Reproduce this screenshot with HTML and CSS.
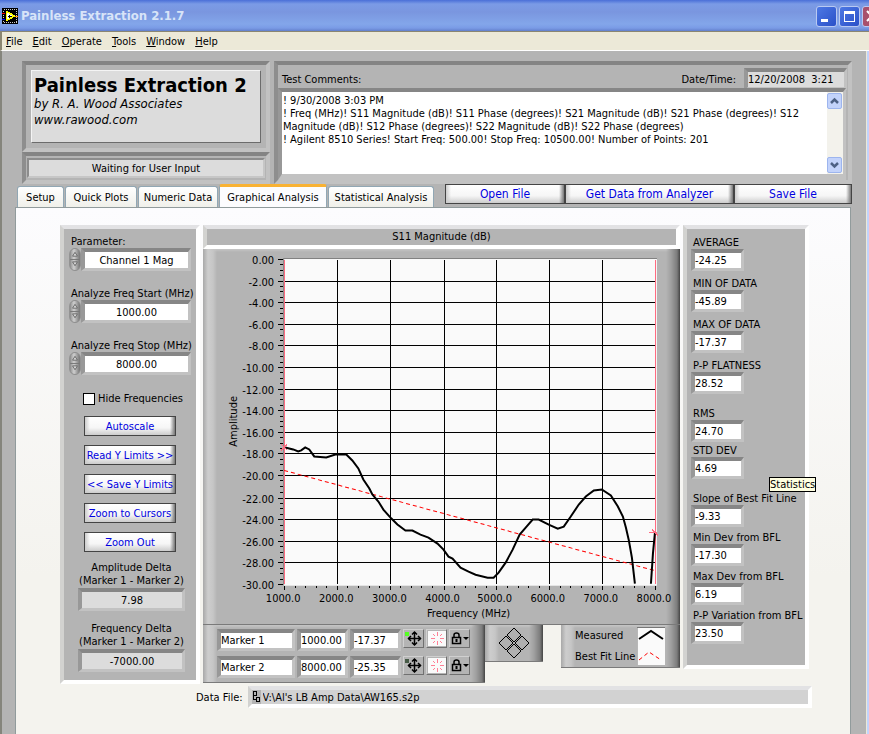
FILE: index.html
```
<!DOCTYPE html>
<html lang="en">
<head>
    <meta charset="utf-8">
    <title>Painless Extraction 2.1.7</title>
    <link rel="stylesheet" href="styles.css">
</head>
<body>
    <header class="titlebar">
        <svg class="app-icon" width="16" height="16" viewBox="0 0 16 16" shape-rendering="crispEdges">
            <rect width="16" height="16" fill="#000"/>
            <rect x="1.5" y="1.5" width="13" height="13" fill="none" stroke="#ccc" stroke-dasharray="1 1"/>
            <path d="M4.500 3.500V12.500L12.500 8Z" fill="#fff" stroke="#ff0" stroke-width="1.500"/>
            <path d="M6 8.500h4M7.500 7v3" stroke="#000"/>
            <path d="M0 5.500h3" stroke="#f00"/>
            <path d="M0 11.500h3" stroke="#00f"/>
            <path d="M13 8.500h3" stroke="#f80"/>
        </svg>
        <span class="title">Painless Extraction 2.1.7</span>
        <div class="win-buttons">
            <button class="win-btn" aria-label="Minimize"><svg width="19" height="19"><rect x="4" y="12" width="7" height="3" fill="#fff"/></svg></button>
            <button class="win-btn" aria-label="Maximize"><svg width="19" height="19" shape-rendering="crispEdges"><path d="M4.500 5v9.500h10V5" fill="none" stroke="#fff"/><rect x="4" y="4" width="11" height="3" fill="#fff"/></svg></button>
            <button class="win-btn close" aria-label="Close"><svg width="19" height="19"><path d="M4 4l10 10M14 4L4 14" stroke="#fff" stroke-width="2"/></svg></button>
        </div>
    </header>

    <nav class="menubar">
        <a href="#"><u>F</u>ile</a>
        <a href="#"><u>E</u>dit</a>
        <a href="#"><u>O</u>perate</a>
        <a href="#"><u>T</u>ools</a>
        <a href="#"><u>W</u>indow</a>
        <a href="#"><u>H</u>elp</a>
    </nav>

    <div class="window">
        <div class="client">
            <section class="top">
                <div class="brand-col">
                    <div class="groove brand">
                        <div class="brand-plate">
                            <h1>Painless Extraction 2</h1>
                            <p>by R. A. Wood Associates</p>
                            <p>www.rawood.com</p>
                        </div>
                    </div>
                    <div class="groove status"><div class="status-text">Waiting for User Input</div></div>
                </div>
                <div class="groove comments">
                    <div class="comments-head">
                        <label for="comments">Test Comments:</label>
                        <label class="date-label" for="datetime">Date/Time:</label>
                        <input class="sunken date" id="datetime" value="12/20/2008  3:21" readonly>
                    </div>
                    <div class="sunken comments-box">
                        <textarea id="comments">! 9/30/2008 3:03 PM
! Freq (MHz)! S11 Magnitude (dB)! S11 Phase (degrees)! S21 Magnitude (dB)! S21 Phase (degrees)! S12
Magnitude (dB)! S12 Phase (degrees)! S22 Magnitude (dB)! S22 Phase (degrees)
! Agilent 8510 Series! Start Freq: 500.00! Stop Freq: 10500.00! Number of Points: 201</textarea>
                        <div class="scroll">
                            <button aria-label="Scroll up"><svg width="13" height="14"><path d="M3 9l3.500-3.500L10 9" fill="none" stroke="#4d6185" stroke-width="2.500"/></svg></button>
                            <button aria-label="Scroll down"><svg width="13" height="14"><path d="M3 5l3.500 3.500L10 5" fill="none" stroke="#4d6185" stroke-width="2.500"/></svg></button>
                        </div>
                    </div>
                </div>
            </section>

            <div class="tab-row">
                <div class="tabs" role="tablist">
                    <button class="tab w-setup" role="tab">Setup</button>
                    <button class="tab w-quick" role="tab">Quick Plots</button>
                    <button class="tab w-numeric" role="tab">Numeric Data</button>
                    <button class="tab w-graph active" role="tab" aria-selected="true">Graphical Analysis</button>
                    <button class="tab w-stat" role="tab">Statistical Analysis</button>
                </div>
                <div class="file-buttons">
                    <button class="btn open">Open File</button>
                    <button class="btn get">Get Data from Analyzer</button>
                    <button class="btn save">Save File</button>
                </div>
            </div>

            <main class="page">
                <div class="columns">
                    <section class="panel controls">
                        <div class="control">
                            <label for="param">Parameter:</label>
                            <div class="spin">
                                <svg class="knob" width="12" height="23" viewBox="0 0 12 24"><use href="#knob-shape"/></svg>
                                <input class="sunken" id="param" value="Channel 1 Mag">
                            </div>
                        </div>
                        <div class="control">
                            <label for="fstart">Analyze Freq Start (MHz)</label>
                            <div class="spin">
                                <svg class="knob" width="12" height="23" viewBox="0 0 12 24"><use href="#knob-shape"/></svg>
                                <input class="sunken" id="fstart" value="1000.00">
                            </div>
                        </div>
                        <div class="control">
                            <label for="fstop">Analyze Freq Stop (MHz)</label>
                            <div class="spin">
                                <svg class="knob" width="12" height="23" viewBox="0 0 12 24"><use href="#knob-shape"/></svg>
                                <input class="sunken" id="fstop" value="8000.00">
                            </div>
                        </div>
                        <div class="check">
                            <input type="checkbox" id="hide">
                            <label for="hide">Hide Frequencies</label>
                        </div>
                        <div class="stack">
                            <button class="btn">Autoscale</button>
                            <button class="btn">Read Y Limits &gt;&gt;</button>
                            <button class="btn">&lt;&lt; Save Y Limits</button>
                            <button class="btn">Zoom to Cursors</button>
                            <button class="btn">Zoom Out</button>
                        </div>
                        <div class="readout">
                            <label for="adelta">Amplitude Delta<br>(Marker 1 - Marker 2)</label>
                            <input class="sunken" id="adelta" value="7.98" readonly>
                        </div>
                        <div class="readout">
                            <label for="fdelta">Frequency Delta<br>(Marker 1 - Marker 2)</label>
                            <input class="sunken" id="fdelta" value="-7000.00" readonly>
                        </div>
                    </section>

                    <section class="graph-col">
                        <h2 class="panel graph-title">S11 Magnitude (dB)</h2>
                        <div class="raised">
                            <svg id="graph" viewBox="0 0 476 374"></svg>
                        </div>
                        <div class="under">
                            <div class="raised markers">
                                <div class="marker">
                                    <input class="sunken m-name" aria-label="Marker 1 name" value="Marker 1">
                                    <input class="sunken m-val" aria-label="Marker 1 frequency" value="1000.00">
                                    <input class="sunken m-val" aria-label="Marker 1 amplitude" value="-17.37">
                                    <button class="tool" aria-label="Move marker 1"><svg width="20" height="17"><rect x="1" y="2" width="4" height="4" fill="#5f2"/><use href="#move-shape"/></svg></button>
                                    <button class="tool" aria-label="Marker 1 style"><svg width="20" height="17"><use href="#star-shape"/></svg></button>
                                    <button class="tool" aria-label="Lock marker 1"><svg width="20" height="17"><use href="#lock-shape"/></svg></button>
                                </div>
                                <div class="marker">
                                    <input class="sunken m-name" aria-label="Marker 2 name" value="Marker 2">
                                    <input class="sunken m-val" aria-label="Marker 2 frequency" value="8000.00">
                                    <input class="sunken m-val" aria-label="Marker 2 amplitude" value="-25.35">
                                    <button class="tool" aria-label="Move marker 2"><svg width="20" height="17"><rect x="1" y="2" width="4" height="4" fill="#465a46"/><use href="#move-shape"/></svg></button>
                                    <button class="tool" aria-label="Marker 2 style"><svg width="20" height="17"><use href="#star-shape"/></svg></button>
                                    <button class="tool" aria-label="Lock marker 2"><svg width="20" height="17"><use href="#lock-shape"/></svg></button>
                                </div>
                            </div>
                            <button class="raised mover" aria-label="Move cursor">
                                <svg width="32" height="32" viewBox="0 0 32 32" fill="#b0b0b0" stroke="#000">
                                    <path d="M16 1l7 7-7 7-7-7zM16 17l7 7-7 7-7-7zM8 9l7 7-7 7-7-7zM24 9l7 7-7 7-7-7z"/>
                                </svg>
                            </button>
                            <div class="raised legend">
                                <div class="legend-names"><span>Measured</span><span>Best Fit Line</span></div>
                                <svg width="28" height="38" viewBox="0 0 28 38">
                                    <rect width="28" height="38" fill="#fafafa"/>
                                    <path d="M0 38V.500h28" fill="none" stroke="#777"/>
                                    <path d="M2 12L14 4l12 8" fill="none" stroke="#000" stroke-width="2"/>
                                    <path d="M2 33l10-8 12 8" fill="none" stroke="#f00" stroke-dasharray="4 3"/>
                                </svg>
                            </div>
                        </div>
                    </section>

                    <section class="panel stats">
                        <div class="stat-group first">
                            <div class="stat"><label for="s1">AVERAGE</label><input class="sunken" id="s1" value="-24.25" readonly></div>
                            <div class="stat"><label for="s2">MIN OF DATA</label><input class="sunken" id="s2" value="-45.89" readonly></div>
                            <div class="stat"><label for="s3">MAX OF DATA</label><input class="sunken" id="s3" value="-17.37" readonly></div>
                            <div class="stat"><label for="s4">P-P FLATNESS</label><input class="sunken" id="s4" value="28.52" readonly></div>
                        </div>
                        <div class="stat-group tight">
                            <div class="stat"><label for="s5">RMS</label><input class="sunken" id="s5" value="24.70" readonly></div>
                            <div class="stat"><label for="s6">STD DEV</label><input class="sunken" id="s6" value="4.69" readonly></div>
                        </div>
                        <div class="stat-group">
                            <div class="stat"><label for="s7">Slope of Best Fit Line</label><input class="sunken" id="s7" value="-9.33" readonly></div>
                            <div class="stat"><label for="s8">Min Dev from BFL</label><input class="sunken" id="s8" value="-17.30" readonly></div>
                            <div class="stat"><label for="s9">Max Dev from BFL</label><input class="sunken" id="s9" value="6.19" readonly></div>
                            <div class="stat"><label for="s10">P-P Variation from BFL</label><input class="sunken" id="s10" value="23.50" readonly></div>
                        </div>
                        <div class="tooltip" role="tooltip">Statistics</div>
                    </section>
                </div>

                <div class="data-file">
                    <label for="path">Data File:</label>
                    <div class="panel path">
                        <svg width="9" height="14" viewBox="0 0 9 14" fill="none" stroke="#000" shape-rendering="crispEdges">
                            <rect width="9" height="14" fill="#b4b4b4" stroke="none"/>
                            <path d="M1.500 1.500h3v4h-3zM4.500 7.500h3v4h-3zM1.500 5v4.500h3"/>
                        </svg>
                        <input id="path" value="V:\Al's LB Amp Data\AW165.s2p">
                    </div>
                </div>
            </main>
        </div>
        <div class="edge"></div>
    </div>

    <!-- shared shapes -->
    <svg width="0" height="0" class="defs">
        <defs>
            <linearGradient id="knob-fill" x1="0" x2="1">
                <stop offset="0" stop-color="#8a8a8a"/>
                <stop offset=".4" stop-color="#cfcfcf"/>
                <stop offset="1" stop-color="#6e6e6e"/>
            </linearGradient>
            <g id="knob-shape">
                <rect x=".500" y=".500" width="11" height="23" rx="5.500" fill="url(#knob-fill)" stroke="#8c8c8c"/>
                <path d="M1 12h10" stroke="#777"/>
                <path d="M3.500 8.500L6 4.500l2.500 4zM3.500 14.500h5L6 18.500z" fill="#ddd" stroke="#666"/>
            </g>
            <g id="move-shape" fill="none" stroke="#000" stroke-width="1.500">
                <path d="M10.500 2v13M4.500 8.500h12"/>
                <path d="M8 4.500l2.500-2.500L13 4.500M8 12.500l2.500 2.500 2.500-2.500M7 6L4.500 8.500 7 11M14 6l2.500 2.500L14 11"/>
            </g>
            <g id="star-shape">
                <rect x="1" y="1" width="18" height="15" fill="#fafafa"/>
                <path d="M10.500 2v4M10.500 11v4M4 8.500h4M13 8.500h4M6 4l2 2M15 4l-2 2M6 13l2-2M15 13l-2-2" stroke="#ff8095"/>
            </g>
            <g id="lock-shape">
                <path d="M4 8V5q0-2 2.500-2T9 5v3" fill="none" stroke="#000" stroke-width="1.500"/>
                <rect x="2.500" y="7.500" width="8" height="6" fill="#b4b4b4" stroke="#000" stroke-width="1.500"/>
                <path d="M6.500 9v3" stroke="#000" stroke-width="2"/>
                <path d="M13 7h6l-3 3z"/>
            </g>
        </defs>
    </svg>
    <script src="graph.js"></script>
</body>
</html>
```
FILE: styles.css
```
* { box-sizing: border-box; }

body {
    margin: 0;
    min-height: 100vh;
    display: flex;
    flex-direction: column;
    background: #b4b4b4;
    color: #000;
    font-family: "DejaVu Sans Condensed", Tahoma, sans-serif;
    font-size: 11px;
    line-height: 13px;
    overflow-x: hidden;
}

h1, h2, p { margin: 0; }
button, input, textarea { font: inherit; color: inherit; }
button { padding: 0; }
svg { display: block; }
.defs { position: absolute; }

/* title bar and menu */
.titlebar {
    display: flex;
    align-items: center;
    height: 31px;
    padding-left: 2px;
    background: linear-gradient(#4a6fd8, #7b9be6 4px, #7a96df 12px, #83a6ea 24px, #7a9be6 28px, #6380cc);
    overflow: hidden;
}
.title {
    margin-left: 3px;
    font-size: 13px;
    line-height: 16px;
    font-weight: bold;
    color: #d8e4f8;
}
.win-buttons {
    display: flex;
    gap: 2px;
    margin: 2px -14px 0 auto;
}
.win-btn {
    width: 21px;
    height: 21px;
    border: 1px solid #b9c9f2;
    border-radius: 3px;
    background: linear-gradient(135deg, #4d78e4, #2a50c8);
}
.win-btn.close { background: #a8506c; }

.menubar {
    display: flex;
    gap: 10px;
    height: 20px;
    padding: 3px 4px 0;
    border-left: 2px solid #8a8672;
    border-top: 1px solid #8a8672;
    border-bottom: 1px solid #fff;
    background: #ece9d8;
}
.menubar a { color: #000; text-decoration: none; }

.window { flex: 1; display: flex; }
.client {
    flex: 1;
    min-width: 0;
    display: flex;
    flex-direction: column;
    padding-top: 10px;
    border-left: 2px solid #85857c;
}
.edge {
    width: 3px;
    border-left: 1px solid #ece9d8;
    background: #c2d3fc;
}

/* bevels */
.groove {
    border: 4px solid;
    border-color: #848484 #c2c2c2 #c2c2c2 #8e8e8e;
}
.sunken {
    border: 4px solid;
    border-width: 4px 3px 3px 4px;
    border-color: #868686 #c2c2c2 #c2c2c2 #989898;
    border-radius: 0;
    background: #fff;
    padding: 0;
    outline: none;
}
.panel {
    border: 4px solid;
    border-color: #e2e2e4 #fff #fff #d2d2d0;
    background: #b4b4b4;
}
.raised {
    border: 0 solid #7a7a7a;
    border-bottom-width: 1px;
    background:
        linear-gradient(to right, #a8a8a8, #cdcdcd 5px, #c6c6c6 10px, transparent 14px),
        linear-gradient(to left, #444, #7c7c7c 3px, #a0a0a0 9px, transparent 14px),
        linear-gradient(#c6c6c6, #b4b4b4 3px);
}

/* top block */
.top {
    display: flex;
    gap: 4px;
    margin: 0 14px 0 20px;
    height: 123px;
}
.brand-col {
    flex: 0 0 248px;
    display: flex;
    flex-direction: column;
}
.brand { flex: 1; padding: 5px; }
.brand-plate {
    height: 100%;
    padding: 3px 2px;
    border: 1px solid;
    border-color: #f4f4f4 #6c6c6c #6c6c6c #f4f4f4;
    background: #dcdcdc;
}
.brand-plate h1 {
    font-size: 20px;
    line-height: 22px;
}
.brand-plate p {
    font-size: 13px;
    line-height: 16px;
    font-style: italic;
}
.status {
    height: 32px;
    padding: 2px 1px;
}
.status-text {
    height: 20px;
    border: 2px solid;
    border-color: #8c8c8c #c6c6c6 #c6c6c6 #8c8c8c;
    background: #dcdcdc;
    text-align: center;
    line-height: 18px;
}
.comments {
    flex: 1;
    min-width: 0;
    display: flex;
    flex-direction: column;
}
.comments-head {
    display: flex;
    align-items: center;
    height: 23px;
    padding: 5px 1px 0 4px;
}
.date-label { margin-left: auto; }
.date {
    width: 103px;
    height: 22px;
    margin-left: 8px;
    background: #dcdcdc;
    white-space: pre;
}
.comments-box {
    flex: 1;
    display: flex;
    margin-right: 2px;
    border-bottom-width: 6px;
}
.comments-box textarea {
    flex: 1;
    border: 0;
    padding: 2px 1px;
    background: #fff;
    resize: none;
    outline: none;
    overflow: hidden;
    white-space: pre;
}
.scroll {
    display: flex;
    flex-direction: column;
    justify-content: space-between;
    width: 16px;
    padding: 1px 0;
    background: #f3f2ec;
}
.scroll button {
    width: 15px;
    height: 16px;
    border: 1px solid #9db5ee;
    border-radius: 2px;
    background: #c3d3fb;
}

/* tabs */
.tab-row {
    display: flex;
    justify-content: space-between;
    height: 23px;
    margin: 0 14px 0 15px;
}
.tabs {
    display: flex;
    align-items: flex-end;
    gap: 1px;
}
.tab {
    height: 21px;
    border: 1px solid #91a7b4;
    border-bottom: 0;
    border-radius: 3px 3px 0 0;
    background: linear-gradient(#fff, #f0f0ea);
}
.tab.active {
    height: 23px;
    border-top: 3px solid #f9b233;
    background: #fcfcfe;
}
.w-setup { width: 47px; }
.w-quick { width: 72px; }
.w-numeric { width: 80px; }
.w-graph { width: 108px; }
.w-stat { width: 106px; }

.btn {
    height: 20px;
    border: 1px solid #444;
    background:
        linear-gradient(to right, #ccc, transparent 5px),
        linear-gradient(to left, #777, transparent 5px),
        linear-gradient(#fff, #f6f6f6 60%, #ccc);
    color: #0000e0;
}
.file-buttons {
    display: flex;
    width: 407px;
    font-size: 12px;
}
.open { width: 120px; }
.get { flex: 1; }
.save { width: 118px; }

/* tab page */
.page {
    flex: 1;
    margin: 0 15px 0 13px;
    padding: 17px 41px 20px 44px;
    border: 1px solid #919b9c;
    border-bottom: 0;
    background: linear-gradient(#fcfcfe, #f4f3ee 70%);
}
.columns {
    display: flex;
    align-items: flex-start;
    gap: 3px;
}

.controls {
    flex: 0 0 140px;
    min-width: 0;
    padding: 7px 5px 8px;
}
.control { margin-bottom: 17px; }
.control label {
    display: block;
    margin-left: 2px;
    line-height: 12px;
    white-space: nowrap;
}
.spin { display: flex; }
.spin input {
    flex: 1;
    min-width: 0;
    height: 23px;
    text-align: center;
}
.check {
    display: flex;
    align-items: center;
    gap: 3px;
    height: 13px;
    margin: 0 0 11px 14px;
}
.check input {
    appearance: none;
    width: 12px;
    height: 12px;
    margin: 0;
    border: 1px solid #000;
    background: #fff;
}
.check label { white-space: nowrap; }
.stack {
    display: flex;
    flex-direction: column;
    gap: 9px;
    width: 92px;
    margin: 0 auto 9px 15px;
}
.readout {
    width: 107px;
    margin: 0 0 11px 9px;
    text-align: center;
}
.readout:last-child { margin-bottom: 0; }
.readout label {
    display: block;
    margin-bottom: 1px;
    white-space: nowrap;
}
.readout input {
    display: block;
    width: 107px;
    height: 23px;
    background: #dcdcdc;
    text-align: center;
}

/* graph */
.graph-col { flex: 1; min-width: 0; }
.graph-title {
    height: 24px;
    font-size: 11px;
    font-weight: normal;
    line-height: 16px;
    text-align: center;
}
#graph { width: 100%; font-size: 11px; }
.grid { stroke: #000; shape-rendering: crispEdges; }
.cursor { stroke: #ff6b81; shape-rendering: crispEdges; }
.measured { fill: none; stroke: #000; stroke-width: 2; }
.fit { fill: none; stroke: #f00; stroke-dasharray: 4 3; }

.under {
    display: flex;
    align-items: flex-start;
}
.markers {
    width: 282px;
    padding: 4px 14px;
}
.marker {
    display: flex;
    gap: 2px;
    height: 22px;
}
.marker + .marker { margin-top: 5px; }
.m-name { width: 78px; }
.m-val { width: 51px; }
.tool {
    width: 21px;
    height: 19px;
    border: 1px solid;
    border-color: #d0d0d0 #707070 #707070 #d0d0d0;
    background: #b4b4b4;
}
.mover {
    display: flex;
    justify-content: center;
    align-items: center;
    width: 58px;
    height: 37px;
}
.legend {
    display: flex;
    justify-content: space-between;
    width: 119px;
    margin-left: auto;
    padding: 2px 15px 2px 14px;
}
.legend-names {
    display: flex;
    flex-direction: column;
    gap: 8px;
    padding-top: 2px;
    white-space: nowrap;
}

/* statistics */
.stats {
    position: relative;
    flex: 0 0 126px;
    min-width: 0;
    display: flex;
    flex-direction: column;
    gap: 14px;
    padding: 8px 4px 21px;
}
.stat-group {
    display: flex;
    flex-direction: column;
    gap: 5px;
}
.stat-group.first { gap: 7px; }
.stat-group.tight { gap: 3px; }
.stat label {
    display: block;
    padding-left: 2px;
    line-height: 12px;
    white-space: nowrap;
}
.stat input {
    display: block;
    width: 53px;
    height: 22px;
}
.tooltip {
    position: absolute;
    left: 82px;
    top: 248px;
    border: 1px solid #000;
    background: #ffffe1;
}

.data-file {
    display: flex;
    align-items: center;
    gap: 5px;
    margin: 2px -3px 0 136px;
}
.path {
    flex: 1;
    display: flex;
    height: 22px;
    background: #d2d2d2;
}
.path input {
    flex: 1;
    border: 0;
    padding: 0 2px;
    background: transparent;
    outline: none;
}
```
FILE: graph.js
```
const NS = "http://www.w3.org/2000/svg";
const graph = document.getElementById("graph");

// plot area inside the graph panel
const left = 81, top0 = 10, width = 371, height = 324;

const measured = [
    "1,188 9,190 14,192 17,191 21,188 25,190 30,197 42,198 51,195 62,195 68,201 74,209 79,220 85,229 88,235 94,242 99,250 107,259 113,265 121,271 128,271 136,275 144,278 153,284 159,290 164,297 168,299 176,308 184,312 191,315 203,318 209,318 214,313 221,303 228,290 235,275 241,268 248,260 254,260 264,265 273,269 279,267 286,257 294,245 301,237 309,231 317,230 326,236 333,247 338,257 341,268 344,281 347,298 350,324",
    "366,324 368,294 370,273"
];

function add(name, attrs, text) {
    const el = document.createElementNS(NS, name);
    for (const key in attrs) el.setAttribute(key, attrs[key]);
    if (text) el.textContent = text;
    graph.appendChild(el);
}

function line(x1, y1, x2, y2, cls) {
    add("line", { x1: x1 + 0.5, y1: y1 + 0.5, x2: x2 + 0.5, y2: y2 + 0.5, class: cls });
}

add("rect", { x: left - 1, y: top0 - 1, width: width + 2, height: height + 2, fill: "#808080" });
add("rect", { x: left, y: top0, width: width + 1, height: height + 2, fill: "#fafafa" });

// amplitude axis, 0 to -30 in steps of 2
for (let i = 0; i <= 60; i++) {
    const y = top0 + Math.round(i * height / 60);
    if (i % 4) {
        line(left - 5, y, left - 2, y, "grid");
        continue;
    }
    line(left - 7, y, left - 2, y, "grid");
    if (i > 0 && i < 60) line(left, y, left + width, y, "grid");
    add("text", { x: left - 10, y: y + 5, "text-anchor": "end" }, (-i / 2).toFixed(2).replace("-0.00", "0.00"));
}

// frequency axis, 1000 to 8000 MHz
for (let i = 0; i <= 35; i++) {
    const x = left + Math.round(i * (width - 1) / 35);
    if (i % 5) {
        line(x, top0 + height + 2, x, top0 + height + 4, "grid");
        continue;
    }
    line(x, top0 + height + 2, x, top0 + height + 6, "grid");
    if (i > 0 && i < 35) line(x, top0, x, top0 + height, "grid");
    add("text", { x: x - 1, y: top0 + height + 18, "text-anchor": "middle" }, (1000 + i * 200).toFixed(1));
}

add("text", { x: 265, y: 367, "text-anchor": "middle" }, "Frequency (MHz)");
add("text", { x: 34, y: 172, "text-anchor": "middle", transform: "rotate(-90 34 172)" }, "Amplitude");

line(left, top0, left, top0 + height, "cursor");
line(left + width - 1, top0, left + width - 1, top0 + height, "cursor");

const move = `translate(${left} ${top0})`;
add("path", { d: "M0 211L370 311", class: "fit", transform: move });
measured.forEach(points => add("polyline", { points: points, class: "measured", transform: move }));
add("path", { d: "M-3 185l6 6M-3 191l6-6M364 273h8M367 270l6 6", class: "cursor", transform: move });
```
